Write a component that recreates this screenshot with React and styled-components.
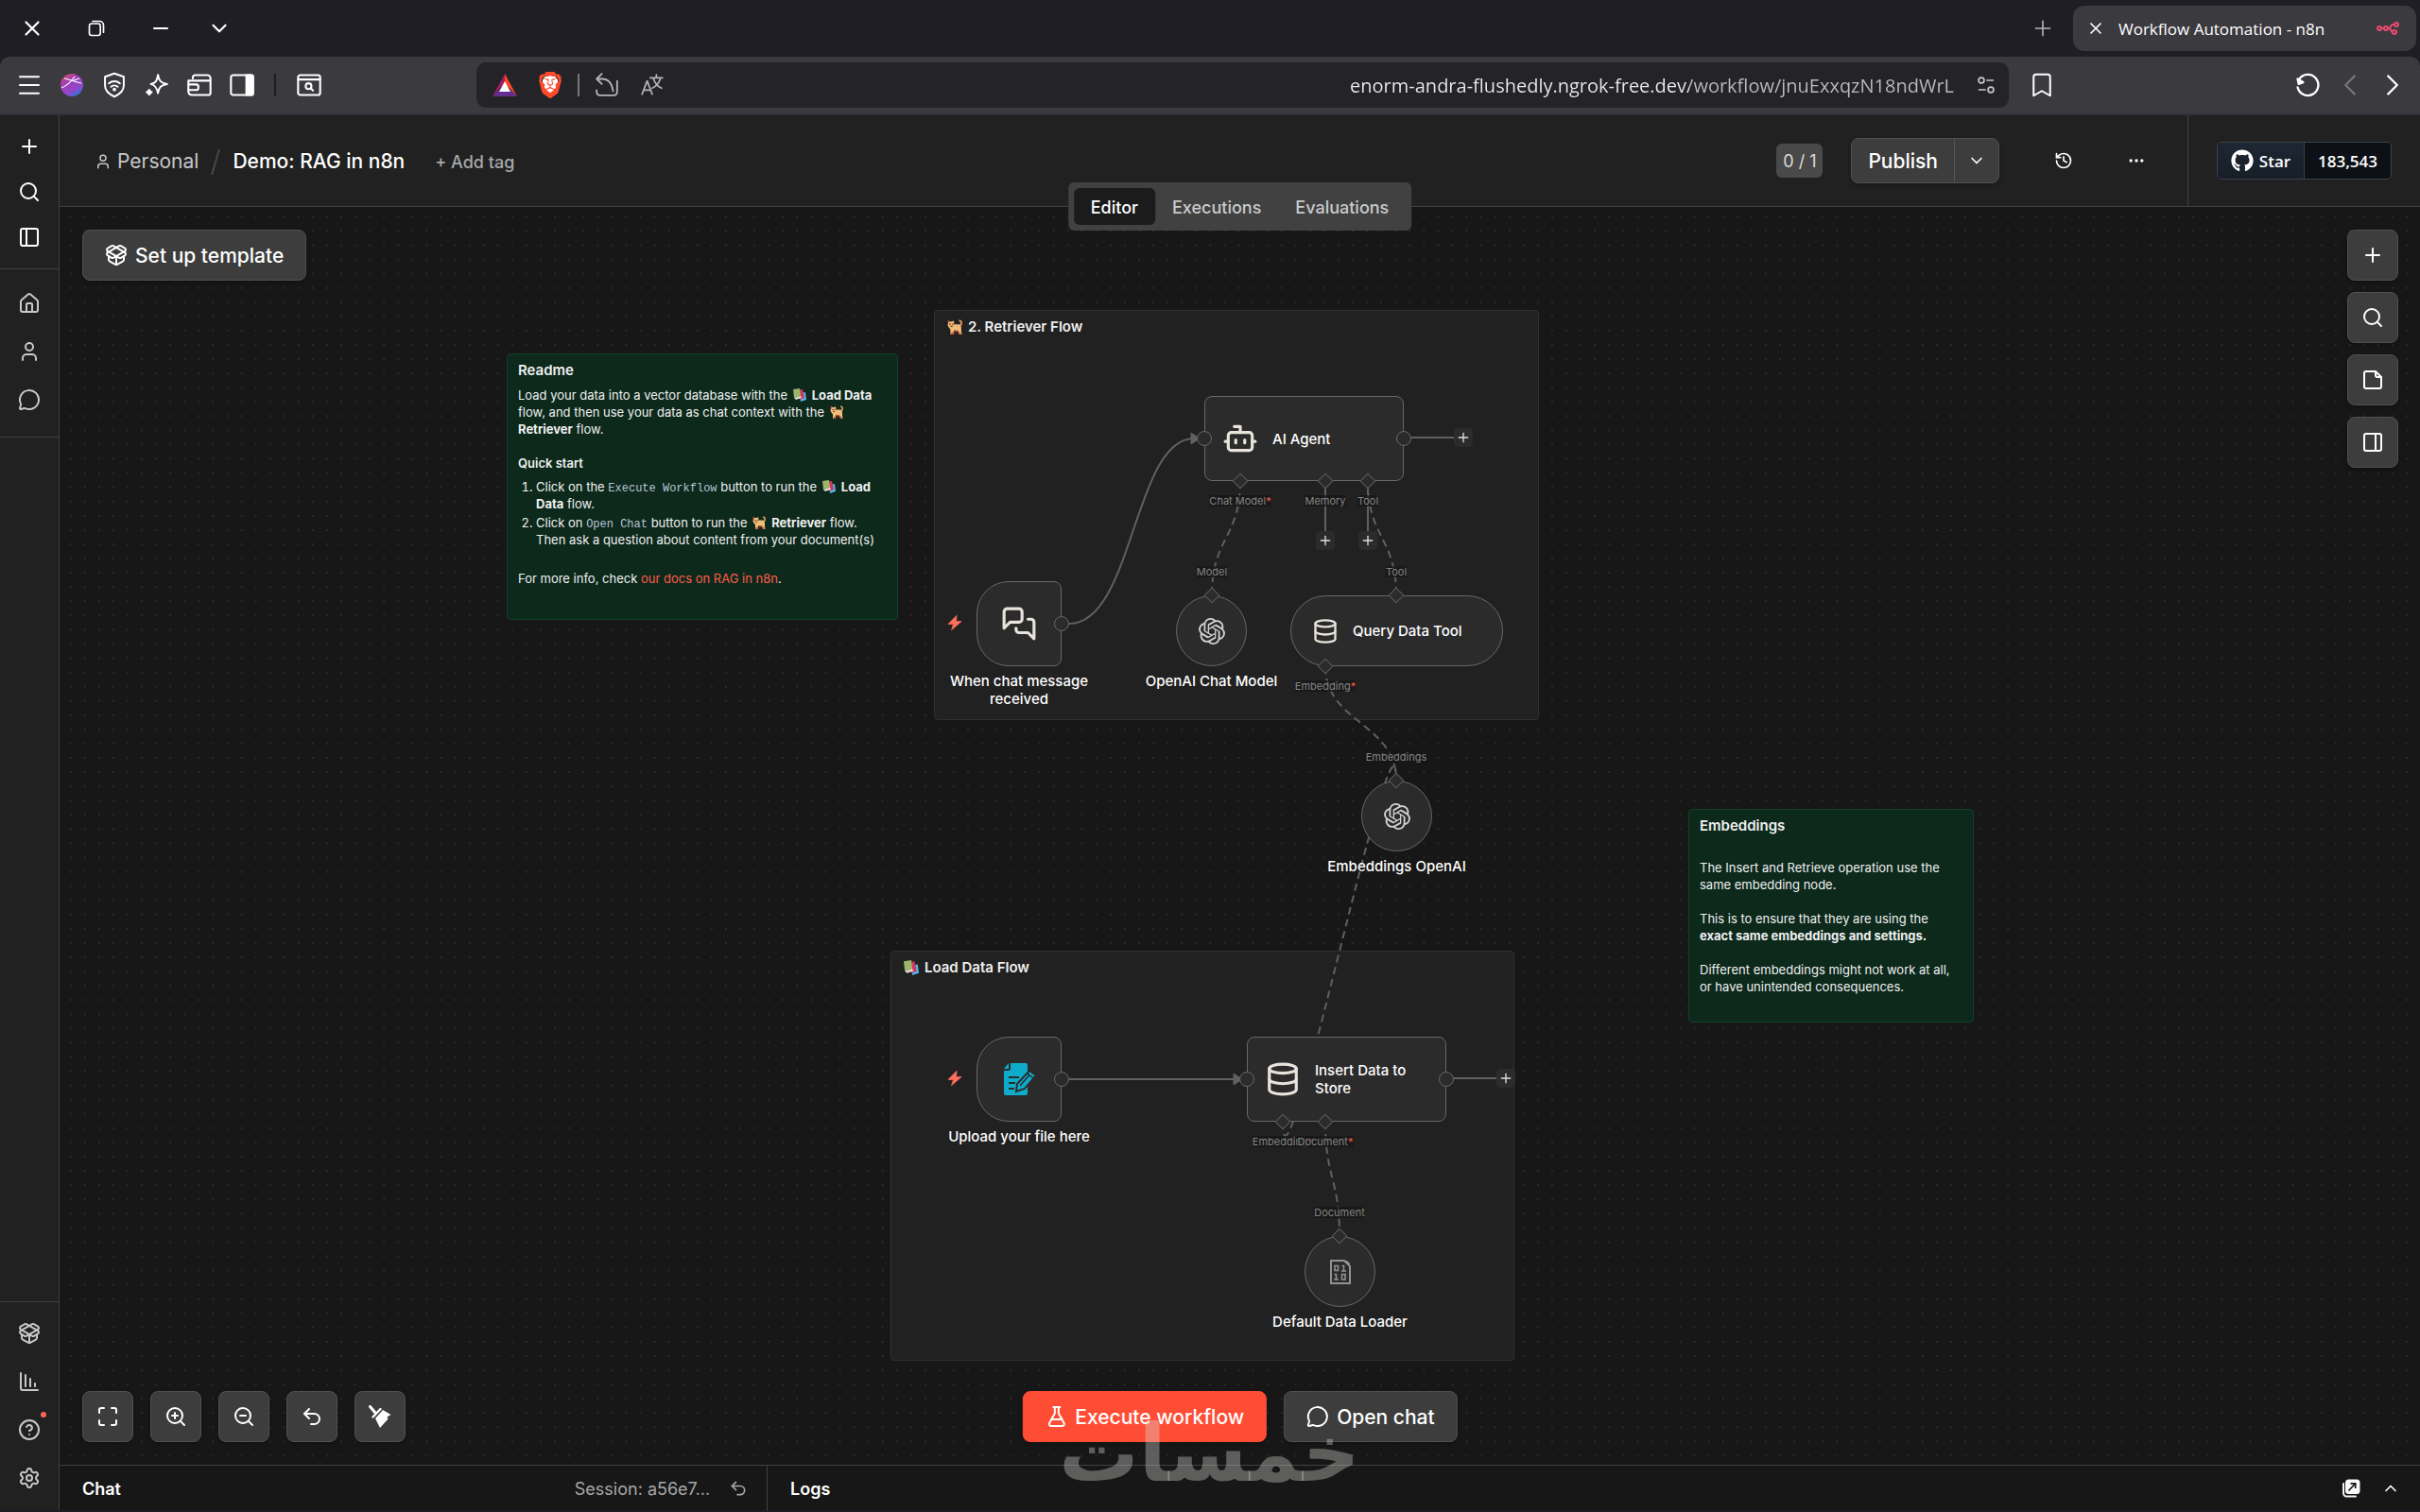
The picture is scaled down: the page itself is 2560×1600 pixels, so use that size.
import React from "react";
import styled, { createGlobalStyle, css } from "styled-components";
import {
  Bookmark,
  Bot,
  ChartColumnDecreasing,
  ChevronDown,
  ChevronLeft,
  ChevronRight,
  ChevronUp,
  CircleHelp,
  Database,
  Ellipsis,
  FlaskConical,
  History,
  House,
  Maximize,
  Menu,
  MessageCircle,
  Minus,
  PackageOpen,
  PanelLeft,
  PanelRight,
  Plus,
  Search,
  Settings,
  Undo2,
  User,
  X,
  ZoomIn,
  ZoomOut,
} from "lucide-react";
import { FaBrave, FaGithub } from "react-icons/fa6";

const GlobalStyle = createGlobalStyle`
  * {
    box-sizing: border-box;
  }

  body {
    margin: 0;
    background-color: #171717;
    font-family: Inter, "Liberation Sans", sans-serif;
    color: #ffffff;
  }

  button, input {
    font-family: inherit;
    color: inherit;
  }

  svg {
    display: block;
    flex: none;
  }
`;

const Shell = styled.div`
  height: 100vh;
  display: grid;
  grid-template-rows: 60px 62px minmax(0, 1fr);
  padding-bottom: 2px;
  overflow: hidden;
  background-color: #1f1e24;
`;

/* ---------- browser chrome ---------- */

const TabStrip = styled.header`
  display: flex;
  align-items: center;
  padding-right: 4px;
  font-family: "Open Sans", "Noto Sans", sans-serif;
`;

const IconButton = styled.button`
  display: flex;
  align-items: center;
  justify-content: center;
  width: ${(props) => props.$width || 48}px;
  height: 48px;
  padding: 0;
  border: 0;
  background: none;
  color: ${(props) => props.$color || "#ffffff"};
  cursor: pointer;
`;

const Spacer = styled.div`
  flex: 1;
`;

const BrowserTab = styled.div`
  display: flex;
  align-items: center;
  width: 363px;
  height: 48px;
  margin-left: 8px;
  padding-right: 18px;
  border-radius: 12px;
  background-color: #3b3a3f;
  font-size: 17px;
`;

const BrowserBar = styled.nav`
  display: grid;
  grid-template-columns: 504px minmax(0, 1fr) 435px;
  align-items: center;
  border-bottom: 2px solid #323135;
  border-radius: 10px 10px 0 0;
  background-color: #3b3a3f;
`;

const BarGroup = styled.div`
  display: flex;
  align-items: center;
  padding: ${(props) => props.$padding || "0"};
`;

const BarDivider = styled.span`
  width: 2px;
  height: 24px;
  margin: 0 ${(props) => props.$gap || 12}px;
  background-color: ${(props) => props.$color};
`;

const AddressBar = styled.div`
  display: flex;
  align-items: center;
  height: 48px;
  padding-left: 6px;
  border-radius: 10px;
  background-color: #242328;
`;

const AddressInput = styled.input`
  flex: 1;
  min-width: 0;
  height: 40px;
  padding: 0 10px;
  border: 0;
  outline: 0;
  text-align: right;
  font-family: "Open Sans", "Noto Sans", sans-serif;
  font-size: 20px;
  background: linear-gradient(to left, #bcbcc0 290px, #ececee 290px);
  background-clip: text;
  -webkit-background-clip: text;
  -webkit-text-fill-color: transparent;
`;

/* ---------- application frame ---------- */

const Workspace = styled.div`
  display: grid;
  grid-template-columns: 63px minmax(0, 1fr);
  min-height: 0;
`;

const Sidebar = styled.aside`
  display: flex;
  flex-direction: column;
  border-right: 1px solid #414141;
  background-color: #212121;
`;

const SidebarGroup = styled.div`
  display: flex;
  flex-direction: column;
  padding: ${(props) => props.$padding};
  border-bottom: ${(props) => (props.$last ? "0" : "1px solid #414141")};
  border-top: ${(props) => (props.$last ? "1px solid #414141" : "0")};
`;

const SidebarButton = styled.button`
  position: relative;
  display: flex;
  align-items: center;
  justify-content: center;
  height: ${(props) => (props.$compact ? 48 : 51)}px;
  padding: 0;
  border: 0;
  background: none;
  color: ${(props) => (props.$compact ? "#ffffff" : "#c6c8ca")};
  cursor: pointer;
`;

const UpdateDot = styled.span`
  position: absolute;
  top: 7px;
  right: 13px;
  width: 6px;
  height: 6px;
  border-radius: 50%;
  background-color: #f6655a;
`;

const Main = styled.main`
  position: relative;
  display: grid;
  grid-template-rows: 97px minmax(0, 1fr) 48px;
  min-width: 0;
`;

const Header = styled.div`
  display: flex;
  align-items: stretch;
  border-bottom: 1px solid #414141;
  background-color: #212121;
`;

const Breadcrumb = styled.div`
  display: flex;
  align-items: center;
  padding: 2px 0 0 37px;
  font-size: 21px;
  line-height: 24px;
`;

const ProjectLink = styled.a`
  display: flex;
  align-items: center;
  gap: 6px;
  color: #c6c8ca;
  text-decoration: none;
`;

const Slash = styled.span`
  width: 2px;
  height: 27px;
  margin: 0 17px;
  background-color: #4a4a4a;
  transform: skewX(-16deg);
`;

const WorkflowName = styled.h1`
  margin: 0;
  font-size: 21px;
  font-weight: 500;
`;

const AddTag = styled.button`
  margin-left: 32px;
  padding: 0;
  border: 0;
  background: none;
  font-size: 18px;
  font-weight: 500;
  color: #a6a8aa;
  cursor: pointer;
`;

const Actions = styled.div`
  display: flex;
  align-items: center;
  gap: 30px;
  padding-right: 30px;
`;

const SetupBadge = styled.span`
  display: flex;
  align-items: center;
  justify-content: center;
  width: 49px;
  height: 36px;
  border-radius: 6px;
  background-color: #494949;
  font-size: 18px;
  color: #dcdcdc;
`;

const raised = css`
  border: 1px solid #505050;
  border-radius: 8px;
  background-color: #3d3d3d;
  box-shadow: 0 2px 4px #00000040;
  color: #ffffff;
`;

const PublishGroup = styled.div`
  ${raised}
  display: flex;
  height: 48px;
`;

const PublishPart = styled.button`
  display: flex;
  align-items: center;
  padding: 0 ${(props) => (props.$menu ? 13 : 17)}px;
  border: 0;
  border-left: ${(props) => (props.$menu ? "1px solid #555555" : "0")};
  background: none;
  font-size: 21px;
  font-weight: 500;
  cursor: pointer;
`;

const MenuButtons = styled.div`
  display: flex;
  gap: 29px;
  margin-left: 14px;
`;

const GitHubArea = styled.div`
  display: flex;
  align-items: center;
  padding: 0 30px;
  border-left: 1px solid #414141;
`;

const StarLink = styled.a`
  display: flex;
  width: 185px;
  height: 40px;
  border: 1px solid #39414b;
  border-radius: 5px;
  overflow: hidden;
  background-color: #0d1117;
  font-family: "Open Sans", "Noto Sans", sans-serif;
  font-size: 17px;
  font-weight: 600;
  color: #ffffff;
  text-decoration: none;
`;

const StarPart = styled.span`
  flex: ${(props) => (props.$label ? "0 0 92px" : "1")};
  display: flex;
  align-items: center;
  justify-content: center;
  gap: 6px;
  background-image: ${(props) =>
    props.$label ? "linear-gradient(#1d2733, #171e27)" : "none"};
  border-right: ${(props) => (props.$label ? "1px solid #39414b" : "0")};
`;

const ViewTabs = styled.div`
  position: absolute;
  z-index: 3;
  top: 71px;
  left: 50%;
  transform: translateX(-50%);
  display: flex;
  padding: 6px;
  border-radius: 6px;
  background-color: #414141;
`;

const ViewTab = styled.button`
  height: 39px;
  padding: 2px 18px 0;
  border: 0;
  border-radius: 6px;
  background-color: ${(props) => (props.$active ? "#1b1b1b" : "transparent")};
  font-size: 18px;
  font-weight: 500;
  color: ${(props) => (props.$active ? "#ffffff" : "#c9cbcd")};
  cursor: pointer;
`;

/* ---------- canvas ---------- */

const Canvas = styled.section`
  position: relative;
  overflow: hidden;
  background-color: #171717;
`;

const DotGrid = styled.svg`
  position: absolute;
  width: 100%;
  height: 100%;
`;

const EdgeLayer = styled.svg`
  position: absolute;
  top: 0;
  left: 0;
  overflow: visible;
  fill: none;
  stroke: #606060;
  stroke-width: 2;
`;

const Sticky = styled.article`
  position: absolute;
  left: ${(props) => props.$x}px;
  top: ${(props) => props.$y}px;
  width: ${(props) => props.$w}px;
  height: ${(props) => props.$h}px;
  padding: 7px 11px;
  border: 1px solid ${(props) => (props.$green ? "#123f2b" : "#303030")};
  border-radius: 4px;
  background-color: ${(props) => (props.$green ? "#0c291c" : "#212121")};
  font-size: 13px;
  line-height: 18px;
  color: #f0f0f0;

  p {
    margin: 0 0 18px;
  }
`;

const StickyTitle = styled.h2`
  display: flex;
  align-items: center;
  gap: 3px;
  margin: 0 0 ${(props) => props.$space || 8}px;
  font-size: 15px;
  line-height: 20px;
  font-weight: 600;
`;

const StickySubtitle = styled.h3`
  margin: 0 0 7px;
  font-size: 13px;
  line-height: 18px;
  font-weight: 600;
`;

const StepList = styled.ol`
  margin: 0 0 23px;
  padding-left: 19px;

  li + li {
    margin-top: 2px;
  }
`;

const Code = styled.code`
  font-family: "Liberation Mono", monospace;
  font-size: 12px;
  line-height: 12px;
  color: #b9c4d6;
`;

const DocsLink = styled.a`
  color: #ff5c4a;
  text-decoration: none;
`;

const InlineEmoji = styled.svg`
  display: inline-block;
  vertical-align: -2px;
  margin: 0 3px 0 2px;
`;

const Node = styled.div`
  position: absolute;
  left: ${(props) => props.$x}px;
  top: ${(props) => props.$y}px;
  width: ${(props) => props.$w}px;
  height: ${(props) => props.$h}px;
  display: flex;
  align-items: center;
  justify-content: ${(props) => (props.$wide ? "flex-start" : "center")};
  gap: 15px;
  padding-left: ${(props) => (props.$wide ? props.$pad : 0)}px;
  border: 1px solid #686868;
  border-radius: ${(props) => props.$radius};
  background-color: #2b2b2b;
  color: #e8e4dc;
`;

const NodeTitle = styled.span`
  max-width: 120px;
  font-size: 15px;
  line-height: 19px;
  font-weight: 500;
  color: #ffffff;
`;

const NodeCaption = styled(NodeTitle)`
  position: absolute;
  top: calc(100% + 7px);
  left: 50%;
  width: max-content;
  max-width: 160px;
  transform: translateX(-50%);
  text-align: center;
`;

const CenteredAt = styled.span`
  position: absolute;
  left: ${(props) => props.$x}px;
  top: ${(props) => props.$y}px;
  transform: translate(-50%, -50%);
`;

const Port = styled(CenteredAt)`
  width: 16px;
  height: 16px;
  border: 1px solid #686868;
  border-radius: 50%;
  background-color: #2b2b2b;
`;

const Diamond = styled(CenteredAt)`
  width: 12px;
  height: 12px;
  border: 1px solid #5c5c5c;
  background-color: #2b2b2b;
  transform: translate(-50%, -50%) rotate(45deg);
`;

const PortLabel = styled(CenteredAt)`
  font-size: 11px;
  line-height: 12px;
  color: #858585;
  background-color: rgba(23, 23, 23, 0.75);

  em {
    font-style: normal;
    color: #ff5c4a;
  }
`;

const AddNode = styled.button`
  position: absolute;
  left: ${(props) => props.$x}px;
  top: ${(props) => props.$y}px;
  display: flex;
  align-items: center;
  justify-content: center;
  width: 20px;
  height: 20px;
  padding: 0;
  border: 0;
  border-radius: 4px;
  transform: translate(-50%, -50%);
  background-color: #2b2b2b;
  color: #e0e0e0;
`;

const Toolbox = styled.div`
  position: absolute;
  z-index: 2;
  display: flex;
`;

const TemplateBox = styled(Toolbox)`
  top: 24px;
  left: 24px;
`;

const SideTools = styled(Toolbox)`
  top: 24px;
  right: 23px;
  flex-direction: column;
  gap: 12px;
`;

const ZoomTools = styled(Toolbox)`
  bottom: 24px;
  left: 24px;
  gap: 18px;
`;

const RunTools = styled(Toolbox)`
  bottom: 24px;
  left: 50%;
  transform: translateX(-50%);
  gap: 18px;
`;

const SquareButton = styled.button`
  ${raised}
  display: flex;
  align-items: center;
  justify-content: center;
  width: 54px;
  height: 54px;
  padding: 0;
  cursor: pointer;
`;

const LabelButton = styled.button`
  ${raised}
  display: flex;
  align-items: center;
  gap: 8px;
  height: 54px;
  padding: 0 23px;
  font-size: 21px;
  font-weight: 500;
  white-space: nowrap;
  cursor: pointer;

  ${(props) =>
    props.$primary &&
    css`
      border-color: #ff4d35;
      background-color: #ff4d35;
    `}
`;

const LogBar = styled.footer`
  display: grid;
  grid-template-columns: 30% minmax(0, 1fr);
  border-top: 1px solid #414141;
  background-color: #171717;
  font-size: 18px;
`;

const LogPanel = styled.div`
  display: flex;
  align-items: center;
  padding: 0 10px 0 24px;
  border-right: ${(props) => (props.$chat ? "1px solid #414141" : "0")};
`;

const LogTitle = styled.h2`
  flex: 1;
  margin: 0;
  font-size: 18px;
  font-weight: 600;
`;

const Session = styled.span`
  margin-right: 10px;
  color: #a6a8aa;
`;

const Watermark = styled.div`
  position: absolute;
  z-index: 4;
  bottom: 18px;
  left: 50%;
  transform: translateX(-50%);
  margin-left: -32px;
  font-family: "DejaVu Sans", sans-serif;
  font-size: 84px;
  line-height: 84px;
  font-weight: 700;
  color: rgba(220, 220, 215, 0.36);
  pointer-events: none;
`;

/* ---------- drawings ---------- */

const Line = ({ size = 24, width = 2, children }) => (
  <svg
    width={size}
    height={size}
    viewBox="0 0 24 24"
    fill="none"
    stroke="currentColor"
    strokeWidth={width}
    strokeLinecap="round"
    strokeLinejoin="round"
  >
    {children}
  </svg>
);

const RestoreIcon = () => (
  <Line size={20}>
    <rect x="3" y="6" width="14" height="15" rx="3" />
    <path d="M7 3h9a5 5 0 0 1 5 5v9" />
  </Line>
);

const BallIcon = () => (
  <svg width="24" height="24" viewBox="0 0 24 24">
    <defs>
      <linearGradient id="ball" x1="0" y1="0" x2="0.6" y2="1">
        <stop offset="0" stopColor="#e0505a" />
        <stop offset="0.4" stopColor="#a03fb4" />
        <stop offset="0.8" stopColor="#9048cc" />
        <stop offset="1" stopColor="#3c6fd8" />
      </linearGradient>
    </defs>
    <circle cx="12" cy="12" r="12" fill="url(#ball)" />
    <path
      d="M1 15C6 13 11 9 15 3M4 5c6 1 11 4 18 5M14 7l6-2"
      stroke="#ffffff"
      strokeWidth="1.2"
      fill="none"
    />
  </svg>
);

const ShieldWifiIcon = () => (
  <Line size={28} width={1.7}>
    <path d="M12 1.5l8.5 3v8c0 5-4 8-8.5 10-4.5-2-8.5-5-8.5-10v-8z" />
    <path d="M7 10.5a7.5 7.5 0 0 1 10 0M9 13.5a4.5 4.5 0 0 1 6 0" />
    <circle cx="12" cy="16" r="0.8" fill="currentColor" />
  </Line>
);

const SparkIcon = () => (
  <Line size={26} width={1.8}>
    <path d="M13 2c1 6 3 8 9 9-6 1-8 3-9 9-1-6-3-8-7-9 5-1 6-3 7-9z" />
    <path d="M4.5 16.5v5M2 19h5" />
    <circle cx="4.5" cy="19" r="1.6" fill="currentColor" />
  </Line>
);

const WalletIcon = () => (
  <Line size={28} width={1.8}>
    <path d="M6 6V5a2 2 0 0 1 2-2h11a3 3 0 0 1 3 3v13a2 2 0 0 1-2 2H5a3 3 0 0 1-3-3V8h20" />
    <path d="M2 11.5h7a2 2 0 0 1 2 2v1a2 2 0 0 1-2 2H2" />
  </Line>
);

const SidePanelIcon = () => (
  <Line size={28} width={1.8}>
    <rect x="2" y="3" width="20" height="18" rx="2" />
    <path d="M16 3h5a1 1 0 0 1 1 1v16a1 1 0 0 1-1 1h-5z" fill="currentColor" />
  </Line>
);

const PageSearchIcon = () => (
  <Line size={28} width={1.8}>
    <rect x="2" y="3" width="20" height="18" rx="2" />
    <path d="M2 7h20" />
    <circle cx="11.5" cy="13" r="2.6" />
    <path d="M13.5 15l2 2" />
  </Line>
);

const BatIcon = () => (
  <svg width="26" height="24" viewBox="0 0 26 24">
    <path d="M13 0L26 24 13 10z" fill="#ff4724" />
    <path d="M13 0v10L0 24z" fill="#9e1f63" />
    <path d="M0 24l7-7h12l7 7z" fill="#662d91" />
    <path d="M13 8l6 11H7z" fill="#ffffff" />
  </svg>
);

const BraveBadge = styled.span`
  display: flex;
  padding: 3px 4px;
  color: #ff4a2b;
  background: radial-gradient(ellipse 9px 11px at center, #ffffff 98%, transparent);
`;

const ShareBackIcon = () => (
  <Line size={26} width={1.7}>
    <path d="M7 1L2 6l5 5M2 6h5c7 0 10 4 11 12" />
    <path d="M2 17v2a3 3 0 0 0 3 3h14a3 3 0 0 0 3-3V8" />
  </Line>
);

const TranslateIcon = () => (
  <Line size={26} width={1.6}>
    <path d="M2 21L7 8l5 13M3.7 17h6.6" />
    <path d="M10 5h12M16 2v3M20 5c-1 5-4 8-8 10M13 5c1 4 4 8 8 10" />
  </Line>
);

const TuneIcon = () => (
  <Line size={20}>
    <circle cx="6" cy="6" r="3.5" />
    <path d="M13 6h8M3 18h8" />
    <circle cx="18" cy="18" r="3.5" />
  </Line>
);

const ReloadIcon = () => (
  <Line size={28}>
    <path d="M4.500 6.500A9.500 9.500 0 1 1 3 14" />
    <path d="M3 6.500l1 4.500 4-1.500z" fill="currentColor" />
  </Line>
);

const N8nLogo = () => (
  <svg width="24" height="14" viewBox="0 0 24 14" fill="none" stroke="#ea4b71" strokeWidth="2">
    <circle cx="3" cy="7" r="2" />
    <circle cx="10" cy="7" r="2" />
    <circle cx="21" cy="3" r="2" />
    <circle cx="19" cy="11" r="2" />
    <path d="M5 7h3M12 7h1c3 0 1-4 4-4h2M13 7c3 0 2 4 4 4" />
  </svg>
);

const ChatIcon = () => (
  <Line size={38}>
    <path d="M14 9a2 2 0 0 1-2 2H6l-4 4V4a2 2 0 0 1 2-2h8a2 2 0 0 1 2 2z" />
    <path d="M18 9h2a2 2 0 0 1 2 2v11l-4-4h-6a2 2 0 0 1-2-2v-1" />
  </Line>
);

const StickyIcon = () => (
  <Line>
    <path d="M5 3h10l6 6v10a2 2 0 0 1-2 2H5a2 2 0 0 1-2-2V5a2 2 0 0 1 2-2z" />
    <path d="M15 3v4a2 2 0 0 0 2 2h4" />
  </Line>
);

const TidyIcon = () => (
  <svg width="24" height="24" viewBox="0 0 24 24" fill="none" stroke="currentColor">
    <path d="M1.5 1.5L7 8" strokeWidth="3" strokeLinecap="round" />
    <path d="M4.5 12.5l8-8.5" strokeWidth="2.4" strokeLinecap="round" />
    <path d="M7 14l8-9 8.5 5-4 2.5 1 2L12 24z" fill="currentColor" stroke="none" />
  </svg>
);

const PopOutIcon = () => (
  <svg width="20" height="20" viewBox="0 0 20 20" fill="none">
    <path d="M2 5v9.5A3.500 3.500 0 0 0 5.500 18.500H15" stroke="#f2f2f0" strokeWidth="2" strokeLinecap="round" />
    <rect x="4" y="0.5" width="15.5" height="15.5" rx="3.5" fill="#fafaf8" />
    <path d="M7.5 12.5l7-7.5M9.5 4.8h5.2V10" stroke="#171717" strokeWidth="1.7" />
  </svg>
);

const BoltIcon = () => (
  <svg width="17" height="17" viewBox="0 0 24 24" fill="#ff6f5c">
    <path d="M15 1L2 14h8L7 23l15-13h-8z" stroke="#ff6f5c" strokeWidth="1" strokeLinejoin="round" />
  </svg>
);

const OpenAiIcon = () => (
  <svg width="28" height="28" viewBox="0 0 24 24" fill="#d0d2d4">
    <path d="M22.2819 9.8211a5.9847 5.9847 0 0 0-.5157-4.9108 6.0462 6.0462 0 0 0-6.5098-2.9A6.0651 6.0651 0 0 0 4.9807 4.1818a5.9847 5.9847 0 0 0-3.9977 2.9 6.0462 6.0462 0 0 0 .7427 7.0966 5.98 5.98 0 0 0 .511 4.9107 6.051 6.051 0 0 0 6.5146 2.9001A5.9847 5.9847 0 0 0 13.2599 24a6.0557 6.0557 0 0 0 5.7718-4.2058 5.9894 5.9894 0 0 0 3.9977-2.9001 6.0557 6.0557 0 0 0-.7475-7.0729zm-9.022 12.6081a4.4755 4.4755 0 0 1-2.8764-1.0408l.1419-.0804 4.7783-2.7582a.7948.7948 0 0 0 .3927-.6813v-6.7369l2.02 1.1686a.071.071 0 0 1 .038.052v5.5826a4.504 4.504 0 0 1-4.4945 4.4944zm-9.6607-4.1254a4.4708 4.4708 0 0 1-.5346-3.0137l.142.0852 4.783 2.7582a.7712.7712 0 0 0 .7806 0l5.8428-3.3685v2.3324a.0804.0804 0 0 1-.0332.0615L9.74 19.9502a4.4992 4.4992 0 0 1-6.1408-1.6464zM2.3408 7.8956a4.485 4.485 0 0 1 2.3655-1.9728V11.6a.7664.7664 0 0 0 .3879.6765l5.8144 3.3543-2.0201 1.1685a.0757.0757 0 0 1-.071 0l-4.8303-2.7865A4.504 4.504 0 0 1 2.3408 7.872zm16.5963 3.8558L13.1038 8.364 15.1192 7.2a.0757.0757 0 0 1 .071 0l4.8303 2.7913a4.4944 4.4944 0 0 1-.6765 8.1042v-5.6772a.79.79 0 0 0-.407-.667zm2.0107-3.0231l-.142-.0852-4.7735-2.7818a.7759.7759 0 0 0-.7854 0L9.409 9.2297V6.8974a.0662.0662 0 0 1 .0284-.0615l4.8303-2.7866a4.4992 4.4992 0 0 1 6.6802 4.66zM8.3065 12.863l-2.02-1.1638a.0804.0804 0 0 1-.038-.0567V6.0742a4.4992 4.4992 0 0 1 7.3757-3.4537l-.142.0805L8.704 5.459a.7948.7948 0 0 0-.3927.6813zm1.0976-2.3654l2.602-1.4998 2.6069 1.4998v2.9994l-2.5974 1.4997-2.6067-1.4997Z" />
  </svg>
);

const FormIcon = () => (
  <svg width="36" height="34" viewBox="-2 0 36 34">
    <path d="M7 0h16a2 2 0 0 1 2 2v30a2 2 0 0 1-2 2H2a2 2 0 0 1-2-2V8h5a2 2 0 0 0 2-2z" fill="#0eaccb" />
    <path d="M0 6l5-6v6z" fill="#0eaccb" />
    <path d="M5 15h11M5 21h7M5 27h6" stroke="#2b2b2b" strokeWidth="2" />
    <path d="M14 22L27 8l7 5-12 14-9 3z" fill="#0eaccb" stroke="#2b2b2b" strokeWidth="2" />
    <path d="M17 24L27 12.5M24.5 10.5l6 5" stroke="#2b2b2b" strokeWidth="1.6" />
  </svg>
);

const BinaryIcon = () => (
  <svg width="22" height="26" viewBox="0 0 22 26" fill="none" stroke="#929292" strokeWidth="2">
    <path d="M1 1h14l6 6v18H1z" />
    <path d="M15 1l6 6v-3l-3-3z" fill="#929292" stroke="none" />
    <path d="M5 6.5h3.5v5H5zM12.5 6.5h2V12M12 12h5" strokeWidth="1.6" />
    <path d="M4.500 15.500h2V21M4 21h5M12.500 15.500H16V21h-3.500z" strokeWidth="1.6" />
  </svg>
);

const BooksEmoji = ({ size = 14 }) => (
  <InlineEmoji width={size} height={size} viewBox="0 0 14 14" role="img" aria-label="books">
    <path d="M7 5l6-1 1 8-6 2z" fill="#55b4e8" />
    <path d="M5 2l5-1 2 9-5 2z" fill="#d3355c" />
    <path d="M0 1l7-1 1 8-7 2z" fill="#9bb56a" />
    <path d="M1 10l7-2 1 2-6 2z" fill="#e4e0d4" />
  </InlineEmoji>
);

const DogEmoji = ({ size = 14 }) => (
  <InlineEmoji width={size} height={size} viewBox="0 0 14 14" role="img" aria-label="dog">
    <path d="M10.500 6c3.500 0 3.500-4.500.5-5" stroke="#e0995a" strokeWidth="1.6" fill="none" />
    <path d="M1 1.500l2 .5h1.500L6 1l.5 3.500h5L13 7v3l.5 4h-2l-1.500-3.500L6.500 10 5 14H3V9.500L.5 6z" fill="#f0bd78" />
    <path d="M0 1l2 .5V4zM4 12h2.500v2H3.500zM10 12h2.500v2h-2zM7 10h3v1.500H7z" fill="#c8573c" />
    <path d="M2 4h1.500v1H2zM4.500 4H6v1H4.500zM3 6h2v1H3z" fill="#7a3b2a" />
  </InlineEmoji>
);

/* ---------- workflow data ---------- */

const nodes = [
  { x: 970, y: 396, w: 90, h: 90, kind: "trigger", icon: <ChatIcon />, caption: "When chat message received" },
  { x: 1211, y: 200, w: 211, h: 90, kind: "root", icon: <Bot size={38} />, title: "AI Agent" },
  { x: 1181, y: 411, w: 75, h: 75, kind: "round", icon: <OpenAiIcon />, caption: "OpenAI Chat Model" },
  { x: 1302, y: 411, w: 225, h: 75, kind: "pill", icon: <Database size={28} />, title: "Query Data Tool" },
  { x: 1377, y: 607, w: 75, h: 75, kind: "round", icon: <OpenAiIcon />, caption: "Embeddings OpenAI" },
  { x: 970, y: 878, w: 90, h: 90, kind: "trigger", icon: <FormIcon />, caption: "Upload your file here" },
  { x: 1256, y: 878, w: 211, h: 90, kind: "root", icon: <Database size={38} />, title: "Insert Data to Store" },
  { x: 1317, y: 1089, w: 75, h: 75, kind: "round", icon: <BinaryIcon />, caption: "Default Data Loader" },
];

const radii = {
  trigger: "34px 8px 8px 34px",
  root: "8px",
  round: "50%",
  pill: "38px",
};

const ports = [
  [1060, 441],
  [1211, 245],
  [1422, 245],
  [1060, 923],
  [1256, 923],
  [1467, 923],
];

const diamonds = [
  [1249, 290],
  [1339, 290],
  [1384, 290],
  [1219, 411],
  [1414, 411],
  [1339, 486],
  [1414, 607],
  [1294, 968],
  [1339, 968],
  [1354, 1089],
];

const labels = [
  { x: 1249, y: 311, text: "Chat Model", required: true },
  { x: 1339, y: 311, text: "Memory" },
  { x: 1384, y: 311, text: "Tool" },
  { x: 1219, y: 386, text: "Model" },
  { x: 1414, y: 386, text: "Tool" },
  { x: 1339, y: 507, text: "Embedding", required: true },
  { x: 1414, y: 582, text: "Embeddings" },
  { x: 1294, y: 989, text: "Embedding", required: true },
  { x: 1339, y: 989, text: "Document", required: true },
  { x: 1354, y: 1064, text: "Document" },
];

const addPoints = [
  [1485, 244],
  [1339, 353],
  [1384, 353],
  [1530, 922],
];

const solidEdges = [
  "M1068 441C1136 441 1136 245 1200 245",
  "M1068 923H1245",
  "M1430 244H1475",
  "M1475 922H1520",
  "M1339 298V343",
  "M1384 298V343",
];

const dashedEdges = [
  "M1249 290C1249 350 1219 350 1219 411",
  "M1384 290C1384 350 1414 350 1414 411",
  "M1339 486C1339 546 1414 546 1414 607",
  "M1294 968C1294 1083 1414 492 1414 607",
  "M1339 968C1339 1028 1354 1028 1354 1089",
];

const bolts = [
  [947, 440],
  [947, 922],
];

const Flow = () => (
  <>
    <Sticky $x={473} $y={155} $w={414} $h={282} $green>
      <StickyTitle $space={7}>Readme</StickyTitle>
      <p>
        Load your data into a vector database with the <BooksEmoji />
        <strong> Load Data</strong> flow, and then use your data as chat context with the{" "}
        <DogEmoji /> <strong>Retriever</strong> flow.
      </p>
      <StickySubtitle>Quick start</StickySubtitle>
      <StepList>
        <li>
          Click on the <Code>Execute Workflow</Code> button to run the <BooksEmoji />
          <strong> Load Data</strong> flow.
        </li>
        <li>
          Click on <Code>Open Chat</Code> button to run the <DogEmoji />
          <strong> Retriever</strong> flow.
          <br />
          Then ask a question about content from your document(s)
        </li>
      </StepList>
      <p>
        For more info, check <DocsLink href="#docs">our docs on RAG in n8n</DocsLink>.
      </p>
    </Sticky>
    <Sticky $x={925} $y={109} $w={640} $h={434}>
      <StickyTitle>
        <DogEmoji size={16} />
        2. Retriever Flow
      </StickyTitle>
    </Sticky>
    <Sticky $x={879} $y={787} $w={660} $h={434}>
      <StickyTitle>
        <BooksEmoji size={16} />
        Load Data Flow
      </StickyTitle>
    </Sticky>
    <Sticky $x={1723} $y={637} $w={302} $h={226} $green>
      <StickyTitle $space={25}>Embeddings</StickyTitle>
      <p>The Insert and Retrieve operation use the same embedding node.</p>
      <p>
        This is to ensure that they are using the <strong>exact same embeddings and settings.</strong>
      </p>
      <p>Different embeddings might not work at all, or have unintended consequences.</p>
    </Sticky>

    <EdgeLayer width="1" height="1">
      {solidEdges.map((d) => (
        <path key={d} d={d} />
      ))}
      {dashedEdges.map((d) => (
        <path key={d} d={d} strokeDasharray="8 5" />
      ))}
      <path d="M1197 239l9 6-9 6zM1242 917l9 6-9 6z" fill="#606060" strokeWidth="1" />
    </EdgeLayer>

    {nodes.map((node) => (
      <Node
        key={node.title || node.caption}
        $x={node.x}
        $y={node.y}
        $w={node.w}
        $h={node.h}
        $wide={!!node.title}
        $pad={node.kind === "pill" ? 22 : 18}
        $radius={radii[node.kind]}
      >
        {node.icon}
        {node.title && <NodeTitle>{node.title}</NodeTitle>}
        {node.caption && <NodeCaption>{node.caption}</NodeCaption>}
      </Node>
    ))}
    {ports.map(([x, y]) => (
      <Port key={`${x}-${y}`} $x={x} $y={y} />
    ))}
    {diamonds.map(([x, y]) => (
      <Diamond key={`${x}-${y}`} $x={x} $y={y} />
    ))}
    {labels.map((label) => (
      <PortLabel key={`${label.x}-${label.y}`} $x={label.x} $y={label.y}>
        {label.text}
        {label.required && <em>*</em>}
      </PortLabel>
    ))}
    {addPoints.map(([x, y]) => (
      <AddNode key={`${x}-${y}`} $x={x} $y={y} aria-label="Add node">
        <Plus size={16} />
      </AddNode>
    ))}
    {bolts.map(([x, y]) => (
      <CenteredAt key={y} $x={x} $y={y}>
        <BoltIcon />
      </CenteredAt>
    ))}
  </>
);

const App = () => (
  <Shell>
    <GlobalStyle />
    <TabStrip>
      <IconButton $width={68} aria-label="Close window">
        <X size={26} />
      </IconButton>
      <IconButton $width={68} aria-label="Restore">
        <RestoreIcon />
      </IconButton>
      <IconButton $width={68} aria-label="Minimise">
        <Minus size={24} />
      </IconButton>
      <IconButton $width={56} aria-label="Search tabs">
        <ChevronDown size={26} />
      </IconButton>
      <Spacer />
      <IconButton aria-label="New tab" $color="#b4b4b8">
        <Plus size={26} strokeWidth={1.5} />
      </IconButton>
      <BrowserTab>
        <IconButton aria-label="Close tab">
          <X size={20} />
        </IconButton>
        Workflow Automation - n8n
        <Spacer />
        <N8nLogo />
      </BrowserTab>
    </TabStrip>

    <BrowserBar>
      <BarGroup $padding="0 0 0 8px">
        <IconButton $width={45} aria-label="Menu">
          <Menu size={30} strokeWidth={1.6} />
        </IconButton>
        <IconButton $width={45} aria-label="Profile">
          <BallIcon />
        </IconButton>
        <IconButton $width={45} aria-label="VPN">
          <ShieldWifiIcon />
        </IconButton>
        <IconButton $width={45} aria-label="Assistant">
          <SparkIcon />
        </IconButton>
        <IconButton $width={45} aria-label="Wallet">
          <WalletIcon />
        </IconButton>
        <IconButton $width={45} aria-label="Side panel">
          <SidePanelIcon />
        </IconButton>
        <BarDivider $color="#1c1b20" />
        <IconButton $width={45} aria-label="Search page">
          <PageSearchIcon />
        </IconButton>
      </BarGroup>
      <AddressBar>
        <IconButton aria-label="Rewards">
          <BatIcon />
        </IconButton>
        <IconButton aria-label="Shields">
          <BraveBadge>
            <FaBrave size={28} />
          </BraveBadge>
        </IconButton>
        <BarDivider $color="#77767b" $gap={5} />
        <IconButton aria-label="Share" $color="#b4b4b8">
          <ShareBackIcon />
        </IconButton>
        <IconButton aria-label="Translate" $color="#b4b4b8">
          <TranslateIcon />
        </IconButton>
        <AddressInput
          aria-label="Address"
          defaultValue="enorm-andra-flushedly.ngrok-free.dev/workflow/jnuExxqzN18ndWrL"
        />
        <IconButton aria-label="Site settings" $color="#c8c8cc">
          <TuneIcon />
        </IconButton>
      </AddressBar>
      <BarGroup $padding="0 7px 0 11px">
        <IconButton aria-label="Bookmark">
          <Bookmark size={30} strokeWidth={1.6} />
        </IconButton>
        <Spacer />
        <IconButton $width={45} aria-label="Reload">
          <ReloadIcon />
        </IconButton>
        <IconButton $width={45} aria-label="Back" $color="#77767b">
          <ChevronLeft size={38} strokeWidth={1.5} />
        </IconButton>
        <IconButton $width={45} aria-label="Forward">
          <ChevronRight size={38} strokeWidth={1.5} />
        </IconButton>
      </BarGroup>
    </BrowserBar>

    <Workspace>
      <Sidebar>
        <SidebarGroup $padding="9px 0">
          <SidebarButton $compact aria-label="Create">
            <Plus />
          </SidebarButton>
          <SidebarButton $compact aria-label="Search">
            <Search />
          </SidebarButton>
          <SidebarButton $compact aria-label="Toggle sidebar">
            <PanelLeft />
          </SidebarButton>
        </SidebarGroup>
        <SidebarGroup $padding="10px 0 14px">
          <SidebarButton aria-label="Overview">
            <House />
          </SidebarButton>
          <SidebarButton aria-label="Personal">
            <User />
          </SidebarButton>
          <SidebarButton aria-label="Chat">
            <MessageCircle />
          </SidebarButton>
        </SidebarGroup>
        <Spacer />
        <SidebarGroup $padding="7px 0 9px" $last>
          <SidebarButton aria-label="Templates">
            <PackageOpen />
          </SidebarButton>
          <SidebarButton aria-label="Insights">
            <ChartColumnDecreasing />
          </SidebarButton>
          <SidebarButton aria-label="Help">
            <CircleHelp />
            <UpdateDot />
          </SidebarButton>
          <SidebarButton aria-label="Settings">
            <Settings />
          </SidebarButton>
        </SidebarGroup>
      </Sidebar>

      <Main>
        <Header>
          <Breadcrumb>
            <ProjectLink href="#personal">
              <User size={18} />
              Personal
            </ProjectLink>
            <Slash />
            <WorkflowName>Demo: RAG in n8n</WorkflowName>
            <AddTag>+ Add tag</AddTag>
          </Breadcrumb>
          <Spacer />
          <Actions>
            <SetupBadge>0 / 1</SetupBadge>
            <PublishGroup>
              <PublishPart>Publish</PublishPart>
              <PublishPart $menu aria-label="More publish options">
                <ChevronDown size={20} />
              </PublishPart>
            </PublishGroup>
            <MenuButtons>
              <IconButton aria-label="History">
                <History size={20} />
              </IconButton>
              <IconButton aria-label="More">
                <Ellipsis size={20} />
              </IconButton>
            </MenuButtons>
          </Actions>
          <GitHubArea>
            <StarLink href="#star">
              <StarPart $label>
                <FaGithub size={24} />
                Star
              </StarPart>
              <StarPart>183,543</StarPart>
            </StarLink>
          </GitHubArea>
        </Header>
        <ViewTabs>
          <ViewTab $active>Editor</ViewTab>
          <ViewTab>Executions</ViewTab>
          <ViewTab>Evaluations</ViewTab>
        </ViewTabs>

        <Canvas>
          <DotGrid>
            <defs>
              <pattern
                id="dots"
                x="4.2"
                y="2.8"
                width="15.07"
                height="15.07"
                patternUnits="userSpaceOnUse"
              >
                <circle cx="7.5" cy="7.5" r="0.65" fill="#4c4c4c" />
              </pattern>
            </defs>
            <rect width="100%" height="100%" fill="url(#dots)" />
          </DotGrid>
          <Flow />
          <TemplateBox>
            <LabelButton>
              <PackageOpen />
              Set up template
            </LabelButton>
          </TemplateBox>
          <SideTools>
            <SquareButton aria-label="Add node">
              <Plus />
            </SquareButton>
            <SquareButton aria-label="Search">
              <Search />
            </SquareButton>
            <SquareButton aria-label="Add sticky note">
              <StickyIcon />
            </SquareButton>
            <SquareButton aria-label="Toggle panel">
              <PanelRight />
            </SquareButton>
          </SideTools>
          <ZoomTools>
            <SquareButton aria-label="Fit view">
              <Maximize />
            </SquareButton>
            <SquareButton aria-label="Zoom in">
              <ZoomIn />
            </SquareButton>
            <SquareButton aria-label="Zoom out">
              <ZoomOut />
            </SquareButton>
            <SquareButton aria-label="Reset zoom">
              <Undo2 />
            </SquareButton>
            <SquareButton aria-label="Tidy up">
              <TidyIcon />
            </SquareButton>
          </ZoomTools>
          <RunTools>
            <LabelButton $primary>
              <FlaskConical />
              Execute workflow
            </LabelButton>
            <LabelButton>
              <MessageCircle />
              Open chat
            </LabelButton>
          </RunTools>
        </Canvas>

        <LogBar>
          <LogPanel $chat>
            <LogTitle>Chat</LogTitle>
            <Session>Session: a56e7...</Session>
            <IconButton $width={40} $color="#a6a8aa" aria-label="Reset session">
              <Undo2 size={20} />
            </IconButton>
          </LogPanel>
          <LogPanel>
            <LogTitle>Logs</LogTitle>
            <IconButton $width={42} aria-label="Pop out">
              <PopOutIcon />
            </IconButton>
            <IconButton $width={42} aria-label="Open panel">
              <ChevronUp size={20} />
            </IconButton>
          </LogPanel>
        </LogBar>
        <Watermark lang="ar">خمسات</Watermark>
      </Main>
    </Workspace>
  </Shell>
);

export default App;
